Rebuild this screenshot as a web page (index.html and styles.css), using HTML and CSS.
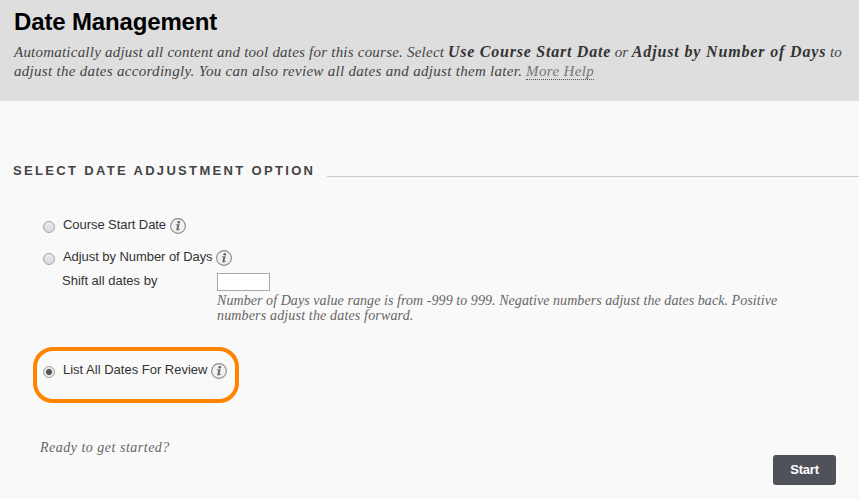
FILE: index.html
```html
<!DOCTYPE html>
<html lang="en">
<head>
<meta charset="utf-8">
<title>Date Management</title>
<link rel="stylesheet" href="styles.css">
</head>
<body>
<svg class="defs" width="0" height="0" aria-hidden="true">
  <symbol id="info" viewBox="0 0 16 16">
    <circle cx="8" cy="8" r="7.4" fill="#f1f1f1" stroke="#8a8a8a" stroke-width="1.1"/>
    <circle cx="8.8" cy="4.2" r="1.3" fill="#606060"/>
    <path d="M5.9 6.4 L9.6 6.2 L8.3 11.2 L9.9 10.8 L9.9 11.5 Q6.2 13.4 6.4 11.5 L7.4 7.3 L5.9 7.2 Z" fill="#606060"/>
  </symbol>
</svg>
<header class="page-header">
  <h1>Date Management</h1>
  <p class="intro">
    <span class="line"><span class="copy-a">Automatically adjust all content and tool dates for this course. Select</span> <strong class="opt-a">Use Course Start Date</strong> or <strong class="opt-b">Adjust by Number of Days</strong> to</span>
    <span class="line"><span class="copy-b">adjust the dates accordingly. You can also review all dates and adjust them later.</span> <a class="help">More Help</a></span>
  </p>
</header>
<main>
  <div class="section-title"><h2>SELECT DATE ADJUSTMENT OPTION</h2><span class="rule"></span></div>
  <div class="option first"><span class="radio"></span><label class="l1">Course Start Date</label><svg class="info"><use href="#info"/></svg></div>
  <div class="option second"><span class="radio"></span><label class="l2">Adjust by Number of Days</label><svg class="info"><use href="#info"/></svg></div>
  <div class="shift">
    <label>Shift all dates by</label>
    <div>
      <input type="text">
      <p class="hint"><span class="line hint-a">Number of Days value range is from -999 to 999. Negative numbers adjust the dates back. Positive</span><span class="line hint-b">numbers adjust the dates forward.</span></p>
    </div>
  </div>
  <div class="highlight"><div class="option"><span class="radio checked"></span><label class="l3">List All Dates For Review</label><svg class="info"><use href="#info"/></svg></div></div>
  <p class="ready">Ready to get started?</p>
  <div class="actions"><button>Start</button></div>
</main>
</body>
</html>
```
FILE: styles.css
```css
* { box-sizing: border-box; }
body { margin: 0; width: 859px; height: 499px; overflow: hidden; background: #f9f9f9; color: #333; font: 13px/16px "Liberation Sans", Arial, sans-serif; }
h1, h2, p { margin: 0; }
.defs { display: block; }
.line { display: block; height: 19px; white-space: nowrap; }
.page-header { height: 101px; padding: 7px 0 0 14px; background: #dedede; }
h1 { font-size: 24px; line-height: 30px; letter-spacing: -0.15px; color: #000; }
.intro { margin-top: 6px; font: italic 15px/19px Georgia, "Liberation Serif", serif; color: #444; }
.intro strong { font-size: 16px; line-height: 18px; color: #333; }
.copy-a { letter-spacing: 0.22px; }
.copy-b { letter-spacing: 0.3px; }
.intro .opt-a { letter-spacing: 0.76px; }
.intro .opt-b { letter-spacing: 0.84px; }
.help { color: #777; border-bottom: 1px dotted #555; display: inline-block; line-height: 16px; letter-spacing: 0.35px; }
.section-title { display: flex; height: 16px; margin: 61px 0 0 13px; }
h2 { width: 314px; font-size: 13px; line-height: 18px; letter-spacing: 2.33px; color: #444; white-space: nowrap; }
.rule { flex: 1; height: 1px; margin-top: 14px; background: #ccc; }
.option { display: flex; height: 18px; white-space: nowrap; }
.first { margin: 39px 0 0 43px; }
.second { margin: 14px 0 0 43px; }
.radio { width: 12px; height: 12px; margin: 4px 8px 0 0; border: 1px solid #a5a5a5; border-radius: 50%; background: linear-gradient(#ececec, #dadada); }
.checked { background: radial-gradient(circle, #555 0 2.7px, #e6e6e6 3.3px); }
.option label { letter-spacing: -0.06px; }
.l1 { width: 103px; }
.l2 { width: 149px; }
.option .l3 { width: 144px; letter-spacing: 0; }
.info { width: 16px; height: 16px; margin: 1px 0 0 4px; }
.shift { display: flex; height: 74px; margin: 6px 0 0 62px; }
.shift label { width: 155px; }
.shift input { display: block; width: 53px; height: 18px; border: 1px solid #a9a9a9; background: #fff; padding: 0; }
.hint { margin-top: 2px; font: italic 14px/15px Georgia, "Liberation Serif", serif; color: #666; }
.hint .line { height: 15px; }
.hint-a { letter-spacing: 0.065px; }
.hint-b { letter-spacing: 0.16px; }
.highlight { width: 206px; height: 56px; margin: 0 0 0 33px; border: 4px solid #ff8400; border-radius: 20px; padding: 11px 0 0 6px; }
.ready { margin: 37px 0 0 40px; font: italic 14px/15px Georgia, "Liberation Serif", serif; letter-spacing: 0.5px; color: #666; }
.actions { display: flex; justify-content: flex-end; padding-right: 23px; }
button { width: 63px; height: 30px; padding: 0; border: 0; border-radius: 3px; background: #50525a; color: #fff; font: bold 13px/30px "Liberation Sans", Arial, sans-serif; letter-spacing: -0.2px; }
```
